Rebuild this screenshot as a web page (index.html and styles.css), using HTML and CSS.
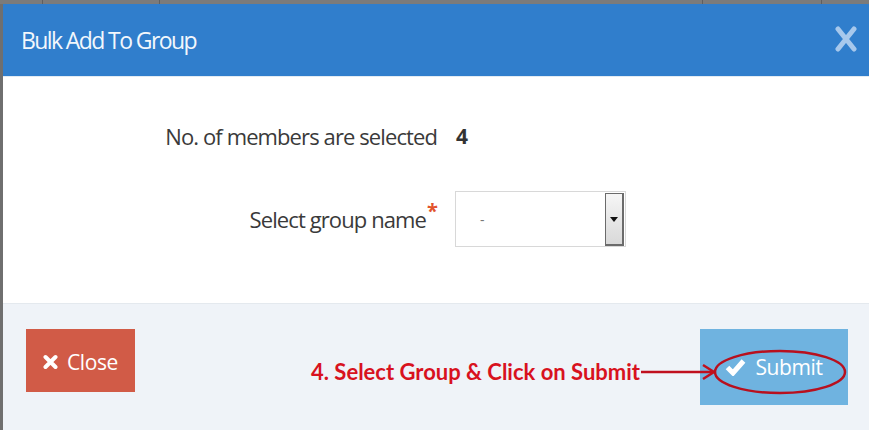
FILE: index.html
```html
<!DOCTYPE html>
<html lang="en">
<head>
  <meta charset="UTF-8" />
  <title>Bulk Add To Group</title>
  <link rel="stylesheet" href="styles.css">
</head>
<body>
  <div class="page-strip">
    <span class="cell c1"></span>
    <span class="cell c2"></span>
    <span class="cell c3"></span>
    <span class="cell c4"></span>
  </div>

  <div class="modal">
    <div class="modal-header">
      <h4 class="modal-title">Bulk Add To Group</h4>
      <button class="header-close" aria-label="Close">
        <svg width="22" height="26" viewBox="0 0 22 26">
          <path d="M3 3 L19 23 M19 3 L3 23" stroke="#a7c8ec" stroke-width="5" stroke-linecap="round"/>
        </svg>
      </button>
    </div>

    <div class="modal-body">
      <div class="form-row">
        <label class="form-label">No. of members are selected</label>
        <div class="form-value count">4</div>
      </div>
      <div class="form-row">
        <label class="form-label">Select group name<span class="required">*</span></label>
        <div class="form-value">
          <div class="select-box">
            <span class="select-text">-</span>
            <span class="select-arrow"></span>
          </div>
        </div>
      </div>
    </div>

    <div class="modal-footer">
      <button class="btn btn-danger">
        <svg width="15" height="16" viewBox="0 0 15 16">
          <path d="M2.5 3 L12.5 13 M12.5 3 L2.5 13" stroke="#fff" stroke-width="4" stroke-linecap="round"/>
        </svg>
        Close
      </button>

      <div class="annotation">4. Select Group &amp; Click on Submit</div>

      <button class="btn btn-info">
        <svg width="21" height="18" viewBox="0 0 21 18">
          <path d="M2.5 9.5 L8 15 L18.5 3" stroke="#fff" stroke-width="5" fill="none" stroke-linejoin="miter"/>
        </svg>
        Submit
      </button>

      <svg class="callout" width="250" height="60" viewBox="0 0 250 60">
        <line x1="4" y1="30" x2="76" y2="30" stroke="#c0101e" stroke-width="2.5"/>
        <path d="M66 23 L77 30 L66 37" stroke="#c0101e" stroke-width="2.5" fill="none"/>
        <ellipse cx="143" cy="30" rx="65" ry="21" stroke="#b8101e" stroke-width="2.5" fill="none"/>
      </svg>
    </div>
  </div>
</body>
</html>
```

FILE: styles.css
```css
* {
  margin: 0;
  padding: 0;
  box-sizing: border-box;
}

body {
  width: 869px;
  height: 430px;
  overflow: hidden;
  background: #6f6f6f;
  font-family: 'Open Sans', sans-serif;
  color: #393939;
}

.page-strip {
  display: flex;
  height: 4px;
  background: #7b7b7b;
}

.page-strip .cell {
  border-right: 1px solid #5f5f5f;
}

.c1 { width: 43px; }
.c2 { width: 117px; }
.c3 { width: 543px; }
.c4 { width: 119px; }

.modal {
  margin-left: 3px;
  height: 426px;
  display: flex;
  flex-direction: column;
  background: #fff;
}

.modal-header {
  height: 73px;
  background: #307ecc;
  border-bottom: 1px solid #e2ebf3;
  display: flex;
  align-items: center;
  justify-content: space-between;
  padding: 0 12px 0 18px;
}

.modal-title {
  font-weight: 400;
  font-size: 23px;
  color: #f2f7fc;
  letter-spacing: -1.6px;
}

.header-close {
  background: none;
  border: none;
  display: flex;
  margin-top: -3px;
}

.modal-body {
  height: 226px;
  padding-top: 44px;
  display: flex;
  flex-direction: column;
}

.form-row {
  display: grid;
  grid-template-columns: 434px 1fr;
  column-gap: 18px;
  align-items: center;
}

.form-row + .form-row {
  margin-top: 40px;
}

.form-label {
  text-align: right;
  font-size: 22px;
  color: #3a3a3a;
  letter-spacing: -0.9px;
}

.required {
  color: #e2532d;
  font-weight: 700;
  font-size: 20px;
  position: relative;
  top: -10px;
  margin-left: 1px;
}

.count {
  font-weight: 700;
  font-size: 21px;
  color: #333;
  padding-left: 1px;
}

.select-box {
  width: 171px;
  height: 56px;
  border: 1px solid #d8d8d8;
  display: flex;
  align-items: center;
  justify-content: space-between;
  padding: 0 1px 0 24px;
}

.select-text {
  color: #777;
  font-size: 14px;
}

.select-arrow {
  position: relative;
  width: 19px;
  height: 53px;
  border: 1px solid #6b6b6b;
  border-width: 1px 2px 2px 1px;
  background: linear-gradient(#f6f6f6, #d9d9d9);
}

.select-arrow::after {
  content: "";
  position: absolute;
  top: 23px;
  left: 4px;
  border-left: 4px solid transparent;
  border-right: 4px solid transparent;
  border-top: 5px solid #111;
}

.modal-footer {
  position: relative;
  flex: 1;
  background: #eff3f8;
  border-top: 1px solid #e4e9ee;
  display: flex;
  align-items: flex-start;
  justify-content: space-between;
  padding: 25px 21px 0 23px;
}

.btn {
  border: none;
  color: #fff;
  font-family: 'Open Sans', sans-serif;
  font-size: 21px;
  display: flex;
  align-items: center;
  justify-content: center;
  letter-spacing: -0.4px;
}

.btn svg {
  margin-right: 9px;
}

.btn-danger {
  width: 109px;
  height: 63px;
  background: #d15b47;
  padding-top: 2px;
}

.btn-info {
  width: 148px;
  height: 76px;
  background: #6fb3e0;
}

.annotation {
  margin-left: auto;
  margin-right: 60px;
  margin-top: 29px;
  font-family: Lato, sans-serif;
  font-weight: 700;
  font-size: 22px;
  color: #d8121e;
}

.callout {
  position: absolute;
  left: 634px;
  top: 38px;
}
```
